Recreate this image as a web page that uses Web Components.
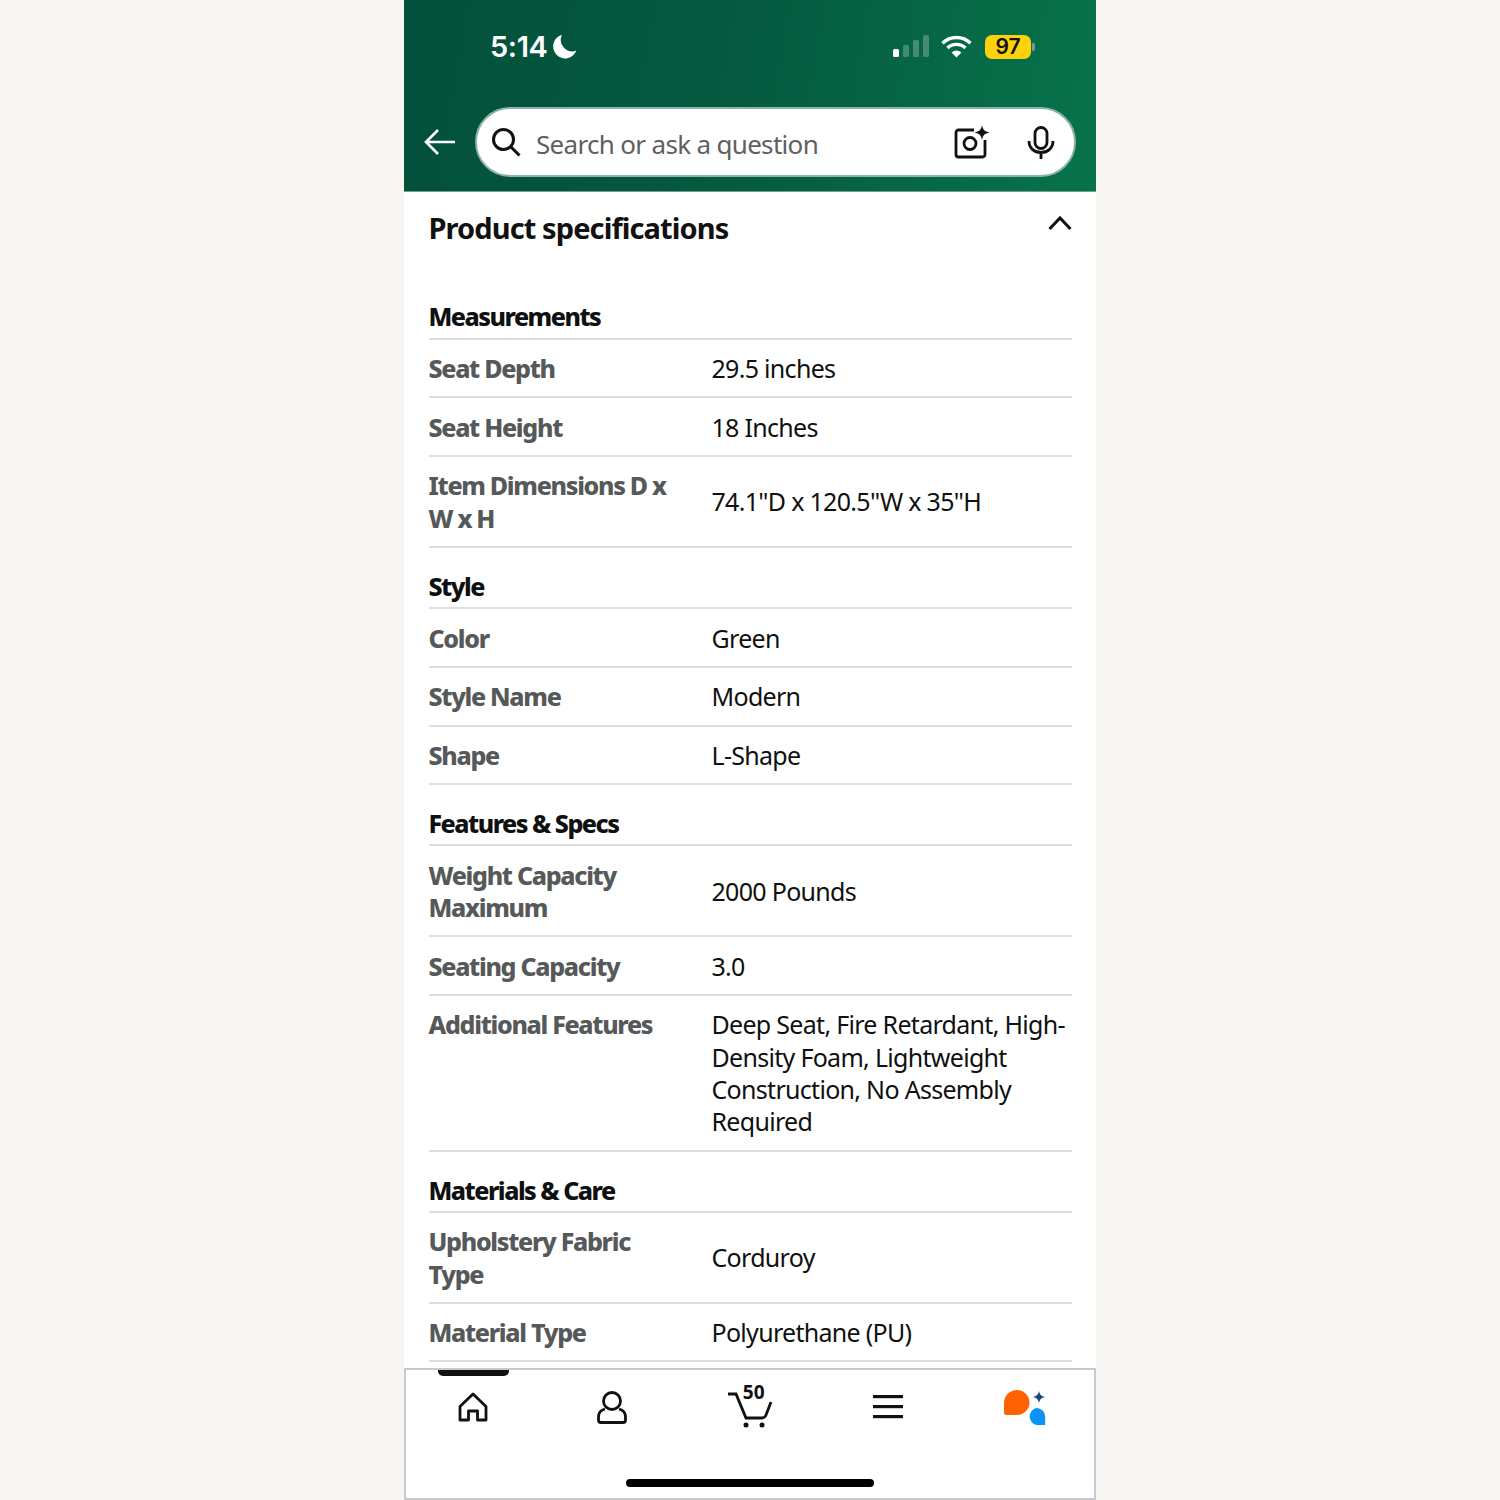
<!DOCTYPE html>
<html>
<head>
<meta charset="utf-8">
<style>
  html, body { margin: 0; background: #f8f6f3; }
  body { font-family: "Noto Sans", "Liberation Sans", sans-serif; }
</style>
</head>
<body>
<phone-page>
  <top-header></top-header>
  <spec-panel title="Product specifications">
    <spec-section title="Measurements">
      <spec-row label="Seat Depth">29.5 inches</spec-row>
      <spec-row label="Seat Height">18 Inches</spec-row>
      <spec-row label="Item Dimensions D x W x H">74.1"D x 120.5"W x 35"H</spec-row>
    </spec-section>
    <spec-section title="Style">
      <spec-row label="Color">Green</spec-row>
      <spec-row label="Style Name">Modern</spec-row>
      <spec-row label="Shape">L-Shape</spec-row>
    </spec-section>
    <spec-section title="Features &amp; Specs">
      <spec-row label="Weight Capacity Maximum">2000 Pounds</spec-row>
      <spec-row label="Seating Capacity">3.0</spec-row>
      <spec-row label="Additional Features" top>Deep Seat, Fire Retardant, High-Density Foam, Lightweight Construction, No Assembly Required</spec-row>
    </spec-section>
    <spec-section title="Materials &amp; Care">
      <spec-row label="Upholstery Fabric Type">Corduroy</spec-row>
      <spec-row label="Material Type">Polyurethane (PU)</spec-row>
    </spec-section>
  </spec-panel>
  <bottom-nav></bottom-nav>
</phone-page>

<script>
const defineElement = (title, markup, setup) => {
    class Component extends HTMLElement {
        connectedCallback() {
            if (this.shadowRoot) return;
            this.attachShadow({ mode: 'open' });
            this.shadowRoot.innerHTML = markup;
            if (setup) setup(this.shadowRoot, this);
        }
    }
    customElements.define(title, Component);
};

defineElement('phone-page', `
  <style>
    :host { display: flex; flex-direction: column; width: 692px; height: 1500px; margin: 0 auto; background: #fff; overflow: hidden; }
  </style>
  <slot></slot>
`);

defineElement('top-header', `
  <style>
    :host { display: block; flex: none; height: 192px; box-sizing: border-box; border-bottom: 1px solid #6f9f8e;
      background: linear-gradient(100deg, #03503b 0%, #05593f 45%, #07734b 100%); }
    .status { display: flex; align-items: center; height: 107px; box-sizing: border-box; padding: 0 61px 14px 86px; color: #fff; }
    .time { font: 600 29px/1 Inter, "Noto Sans", sans-serif; letter-spacing: -0.4px; }
    .moon { margin-left: 5px; }
    .right { margin-left: auto; display: flex; align-items: center; }
    .battery { display: flex; align-items: center; margin-left: 13px; }
    .level { width: 46px; height: 24px; border-radius: 7px; background: #fdd20a; color: #111; text-align: center;
      font: 600 21px/24px Inter, "Noto Sans", sans-serif; }
    .nub { width: 3px; height: 8px; margin-left: 1px; border-radius: 0 2px 2px 0; background: #6f9f8e; }
    .bar { display: flex; align-items: center; padding: 0 20px 0 20px; }
    .back { flex: none; width: 32px; height: 28px; margin-right: 19px; }
    .search { flex: 1; display: flex; align-items: center; height: 70px; box-sizing: border-box; background: #fff;
      border: 2px solid #8db3a8; border-radius: 35px; padding: 0 19px 0 14px; }
    .text { flex: 1; margin-left: 15px; margin-top: 3px; color: #5f6061; font-size: 26px; line-height: 32px; letter-spacing: -0.68px; }
    .cam { margin-right: 37px; }
    svg { display: block; }
  </style>
  <div class="status">
    <span class="time">5:14</span>
    <svg class="moon" width="25" height="25" viewBox="0 0 25 25"><path d="M10 .8A12 12 0 1 0 24.4 16.6 11.5 11.5 0 0 1 10 .8Z" fill="#fff"/></svg>
    <div class="right">
      <svg width="36" height="24" viewBox="0 0 36 24">
        <rect x="0" y="14" width="6" height="8" rx="1.5" fill="#fff"/>
        <rect x="10" y="10" width="6" height="12" rx="1.5" fill="#fff" opacity=".25"/>
        <rect x="20" y="5" width="6" height="17" rx="1.5" fill="#fff" opacity=".25"/>
        <rect x="30" y="0" width="6" height="22" rx="1.5" fill="#fff" opacity=".25"/>
      </svg>
      <svg style="margin-left:12px" width="31" height="23" viewBox="0 0 31 23" fill="none" stroke="#fff" stroke-width="3.4">
        <path d="M1.5 8.2a20 20 0 0 1 28 0"/><path d="M6.5 13a13 13 0 0 1 18 0"/>
        <path d="M15.5 22.5 10.6 17.4a7 7 0 0 1 9.8 0Z" fill="#fff" stroke="none"/>
      </svg>
      <div class="battery"><div class="level">97</div><div class="nub"></div></div>
    </div>
  </div>
  <div class="bar">
    <svg class="back" viewBox="0 0 32 28" fill="none" stroke="#fff" stroke-width="2.6"><path d="M31 14H2M14 2 2 14l12 12"/></svg>
    <div class="search">
      <svg width="30" height="30" viewBox="0 0 30 30" fill="none" stroke="#111" stroke-width="3"><circle cx="12.5" cy="12.5" r="10"/><path d="m20 20 8.5 8.5"/></svg>
      <span class="text">Search or ask a question</span>
      <svg class="cam" width="36" height="34" viewBox="0 0 36 34">
        <path d="M20 5H4.500A2.500 2.500 0 0 0 2 7.500v22A2.500 2.500 0 0 0 4.500 32h24a2.500 2.500 0 0 0 2.500-2.500V15" fill="none" stroke="#111" stroke-width="2.800"/>
        <circle cx="16" cy="18.500" r="6" fill="none" stroke="#111" stroke-width="2.800"/>
        <path d="M28 0c1 5 2.500 6.500 7.500 7.500-5 1-6.500 2.500-7.500 7.500-1-5-2.500-6.500-7.500-7.500 5-1 6.500-2.500 7.500-7.500Z" fill="#111"/>
      </svg>
      <svg width="28" height="33" viewBox="0 0 28 33" fill="none" stroke="#111" stroke-width="2.800">
        <rect x="8" y="1.500" width="12" height="21" rx="6"/>
        <path d="M2 15c0 7 5 11.500 12 11.500S26 22 26 15M14 26.500V33"/>
      </svg>
    </div>
  </div>
`);

defineElement('spec-panel', `
  <style>
    :host { display: block; flex: 1; min-height: 0; overflow: hidden; padding: 0 24px 0 24.500px; }
    .head { display: flex; justify-content: space-between; height: 86.400px; padding-top: 18px; box-sizing: border-box; }
    h2 { margin: 0; font-size: 29px; line-height: 36px; font-weight: 700; color: #111; font-stretch: 87.5%; letter-spacing: -0.9px; }
    svg { margin: 5px 0 0; }
  </style>
  <div class="head">
    <h2></h2>
    <svg width="24" height="16" viewBox="0 0 24 16" fill="none" stroke="#111" stroke-width="3"><path d="M1.500 14 12 3l10.500 11"/></svg>
  </div>
  <slot></slot>
`, (root, host) => {
    root.querySelector('h2').textContent = host.getAttribute('title');
});

defineElement('spec-section', `
  <style>
    :host { display: block; }
    h3 { margin: 0; padding: 23px 0 5.200px; font-size: 25px; line-height: 31px; font-weight: 800; color: #0f1111; border-bottom: 2px solid #dcdedf; font-stretch: 87.5%; letter-spacing: -1.5px; }
  </style>
  <h3></h3>
  <slot></slot>
`, (root, host) => {
    root.querySelector('h3').textContent = host.getAttribute('title');
});

defineElement('spec-row', `
  <style>
    :host { display: grid; grid-template-columns: 283px 1fr; padding: 12.400px 0 12px; border-bottom: 2px solid #dcdedf;
      font-size: 25px; line-height: 32.300px; align-items: center; }
    :host([top]) { align-items: start; }
    .label { font-weight: 800; color: #565959; padding-right: 40px; font-stretch: 87.5%; letter-spacing: -1.3px; }
    .value { color: #0f1111; letter-spacing: -0.7px; }
  </style>
  <div class="label"></div>
  <div class="value"><slot></slot></div>
`, (root, host) => {
    root.querySelector('.label').textContent = host.getAttribute('label');
});

defineElement('bottom-nav', `
  <style>
    :host { display: block; flex: none; height: 132px; box-sizing: border-box; position: relative; background: #fff; border: 2px solid #c8c9ca; }
    .tabs { display: grid; grid-template-columns: repeat(5, 138.400px); margin-left: -2px; padding-top: 19px; }
    .tab { display: flex; justify-content: center; align-items: center; height: 36px; position: relative; }
    .mark { position: absolute; top: 0; left: 32px; width: 71px; height: 6px; background: #111; border-radius: 0 0 5px 5px; }
    .count { position: absolute; left: 62px; top: -7px; font-size: 19px; line-height: 20px; font-weight: 700; color: #111; }
    .home-bar { position: absolute; left: 220px; bottom: 11px; width: 248px; height: 8px; border-radius: 4px; background: #000; }
    svg { display: block; }
  </style>
  <div class="mark"></div>
  <div class="tabs">
    <div class="tab"><svg width="30" height="30" viewBox="0 0 30 30" fill="none" stroke="#111" stroke-width="2.800" stroke-linejoin="round"><path d="M15 2 2 14.500V28h8.500V19h9v9H28V14.500Z"/></svg></div>
    <div class="tab"><svg width="30" height="33" viewBox="0 0 30 33" fill="none" stroke="#111" stroke-width="2.800"><circle cx="15" cy="10" r="8.500"/><path d="M8 18C4 19 1.500 22 1.500 26v3c0 1.500 1 2.500 2.500 2.500h22c1.500 0 2.500-1 2.500-2.500v-3c0-4-2.500-7-6.500-8"/></svg></div>
    <div class="tab"><svg width="46" height="36" viewBox="0 0 46 36" style="margin-top:5px" fill="none" stroke="#111" stroke-width="2.800"><path d="M1 2h8l10 24h16c2 0 3-.8 4-3l5-13"/><circle cx="19" cy="33" r="2.500" fill="#111" stroke="none"/><circle cx="35" cy="33" r="2.500" fill="#111" stroke="none"/></svg><span class="count">50</span></div>
    <div class="tab"><svg width="30" height="24" viewBox="0 0 30 24" fill="#111"><rect y="0" width="30" height="3.200"/><rect y="10" width="30" height="3.200"/><rect y="20" width="30" height="3.200"/></svg></div>
    <div class="tab"><svg width="42" height="36" viewBox="0 0 42 36" style="margin-left:-3px;margin-top:2px">
      <path d="M13 0a12.500 12.500 0 0 1 0 25H2.500A2.500 2.500 0 0 1 0 22.500V13A13 13 0 0 1 13 0Z" fill="#ff6200"/>
      <path d="M32.500 18a8.700 8.700 0 0 1 8.700 8.700v8.300h-8.700a8.700 8.700 0 0 1 0-17Z" fill="#0a94f5"/>
      <path d="M35 1c.8 3.600 2 5 6 6-4 1-5.200 2.400-6 6-.8-3.600-2-5-6-6 4-1 5.200-2.400 6-6Z" fill="#17497a"/>
    </svg></div>
  </div>
  <div class="home-bar"></div>
`);
</script>
</body>
</html>
